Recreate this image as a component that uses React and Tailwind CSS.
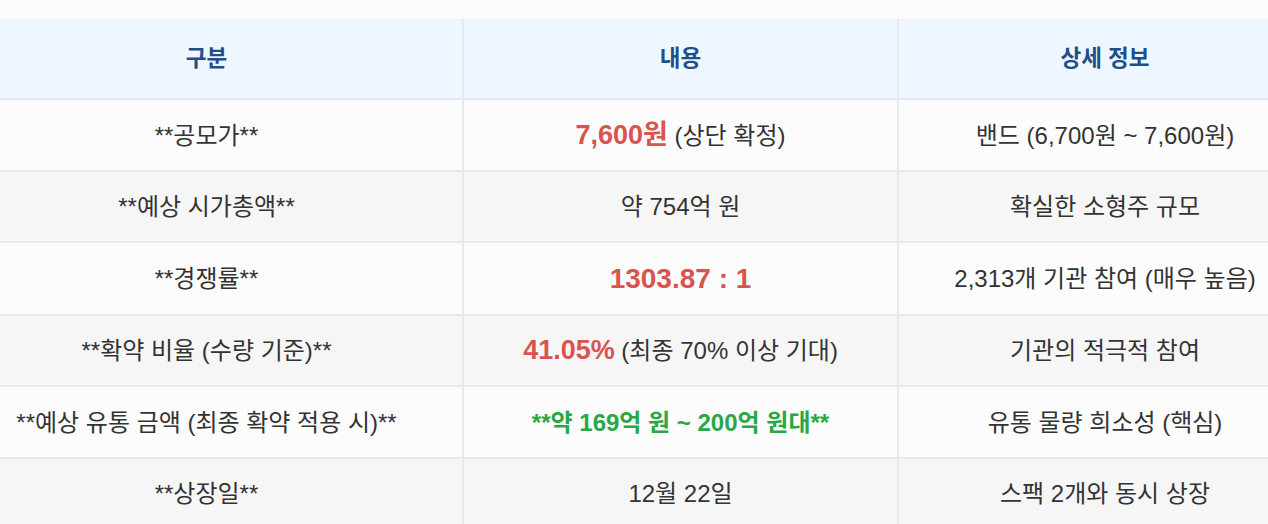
const rows = [
  {
    label: '**공모가**',
    content: (
      <>
        <span className="text-[27px] font-bold text-[#d9534f]">7,600원</span> (상단 확정)
      </>
    ),
    detail: '밴드 (6,700원 ~ 7,600원)',
  },
  { label: '**예상 시가총액**', content: '약 754억 원', detail: '확실한 소형주 규모' },
  {
    label: '**경쟁률**',
    content: <span className="text-[28px] font-bold text-[#d9534f]">1303.87 : 1</span>,
    detail: '2,313개 기관 참여 (매우 높음)',
  },
  {
    label: '**확약 비율 (수량 기준)**',
    content: (
      <>
        <span className="text-[27px] font-bold text-[#d9534f]">41.05%</span> (최종 70% 이상 기대)
      </>
    ),
    detail: '기관의 적극적 참여',
  },
  {
    label: '**예상 유통 금액 (최종 확약 적용 시)**',
    content: <span className="font-bold text-[#28a745]">**약 169억 원 ~ 200억 원대**</span>,
    detail: '유통 물량 희소성 (핵심)',
  },
  { label: '**상장일**', content: '12월 22일', detail: '스팩 2개와 동시 상장' },
]

export default function App() {
  return (
    <div
      className="min-h-[524px] bg-[#fbfbfb] pt-[19px] overflow-hidden"
      style={{ fontFamily: '"Liberation Sans", Arial, "Noto Sans CJK KR", sans-serif' }}
    >
      <table className="-ml-[49px] w-[1360px] border-collapse table-fixed text-[24px] text-[#333]">
        <colgroup>
          <col className="w-[512px]" />
          <col className="w-[435px]" />
          <col className="w-[413px]" />
        </colgroup>
        <thead>
          <tr className="bg-[#eef6ff]">
            {['구분', '내용', '상세 정보'].map((h, i) => (
              <th
                key={h}
                className={`py-[22px] leading-[35px] text-[22.5px] font-bold text-[#1f4e89] border-b-2 border-[#e6e9ed] ${
                  i < 2 ? 'border-r-2' : ''
                }`}
              >
                {h}
              </th>
            ))}
          </tr>
        </thead>
        <tbody>
          {rows.map((r, i) => (
            <tr key={r.label} className={i % 2 === 0 ? 'bg-[#fcfcfc]' : 'bg-[#f6f6f6]'}>
              <td className="pt-[18.5px] pb-[18px] leading-[33px] text-center border-b-2 border-r-2 border-[#e6e9ed]">
                {r.label}
              </td>
              <td className="pt-[18.5px] pb-[18px] leading-[33px] text-center border-b-2 border-r-2 border-[#e6e9ed]">
                {r.content}
              </td>
              <td className="pt-[18.5px] pb-[18px] leading-[33px] text-center border-b-2 border-[#e6e9ed]">
                {r.detail}
              </td>
            </tr>
          ))}
        </tbody>
      </table>
    </div>
  )
}
